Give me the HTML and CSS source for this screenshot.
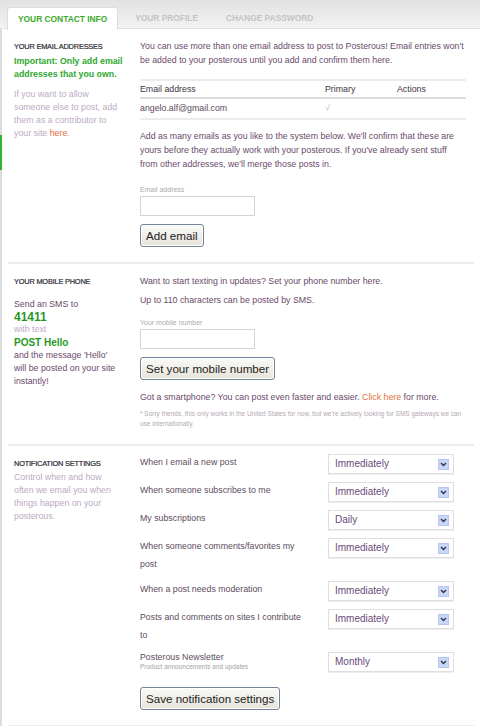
FILE: index.html
```html
<!DOCTYPE HTML>
<html lang="en">
<head>
  <title>Settings</title>
  <meta content="text/html;charset=utf-8" http-equiv="Content-type"/>
  <meta name="viewport" content="width=device-width, initial-scale=1">
  <link rel="stylesheet" href="styles.css">
</head>
<body>
<div id="tabs">
  <div class="tab active">YOUR CONTACT INFO</div>
  <div class="tab">YOUR PROFILE</div>
  <div class="tab">CHANGE PASSWORD</div>
</div>
<div id="page">
  <span class="focusbar"></span>

  <!-- email addresses -->
  <div class="section">
    <div class="side">
      <h3>YOUR EMAIL ADDRESSES</h3>
      <p class="important">Important: Only add email addresses that you own.</p>
      <p class="light narrow">If you want to allow someone else to post, add them as a contributor to your site <a href="#">here</a>.</p>
    </div>
    <div class="main">
      <p>You can use more than one email address to post to Posterous! Email entries won't be added to your posterous until you add and confirm them here.</p>
      <table class="emails">
        <thead>
        <tr><th>Email address</th><th class="primary">Primary</th><th class="actions">Actions</th></tr>
        </thead>
        <tbody>
        <tr><td>angelo.alf@gmail.com</td><td class="primary check">&radic;</td><td class="actions"></td></tr>
        </tbody>
      </table>
      <p>Add as many emails as you like to the system below. We'll confirm that these are yours before they actually work with your posterous. If you've already sent stuff from other addresses, we'll merge those posts in.</p>
      <label class="field">Email address</label>
      <input class="text" type="text"/>
      <button>Add email</button>
    </div>
  </div>

  <!-- mobile phone -->
  <div class="section">
    <div class="side sms">
      <h3>YOUR MOBILE PHONE</h3>
      <div>Send an SMS to</div>
      <div class="number">41411</div>
      <div class="light">with text</div>
      <div class="code">POST Hello</div>
      <div class="narrow">and the message 'Hello' will be posted on your site instantly!</div>
    </div>
    <div class="main">
      <p class="first">Want to start texting in updates? Set your phone number here.</p>
      <p>Up to 110 characters can be posted by SMS.</p>
      <label class="field near">Your mobile number</label>
      <input class="text" type="text"/>
      <button>Set your mobile number</button>
      <p class="smart">Got a smartphone? You can post even faster and easier. <a href="#">Click here</a> for more.</p>
      <p class="note">* Sorry friends, this only works in the United States for now, but we're actively looking for SMS gateways we can use internationally.</p>
    </div>
  </div>

  <!-- notifications -->
  <div class="section">
    <div class="side">
      <h3>NOTIFICATION SETTINGS</h3>
      <p class="light desc narrow">Control when and how often we email you when things happen on your posterous.</p>
    </div>
    <div class="main notify">
      <div class="row"><div class="label">When I email a new post</div><div class="select">Immediately<span class="arrow"><svg width="7" height="5" viewBox="0 0 7 5"><path d="M1 1l2.5 2.5L6 1" fill="none" stroke="#334" stroke-width="1.4"/></svg></span></div></div>
      <div class="row"><div class="label">When someone subscribes to me</div><div class="select">Immediately<span class="arrow"><svg width="7" height="5" viewBox="0 0 7 5"><path d="M1 1l2.5 2.5L6 1" fill="none" stroke="#334" stroke-width="1.4"/></svg></span></div></div>
      <div class="row"><div class="label">My subscriptions</div><div class="select">Daily<span class="arrow"><svg width="7" height="5" viewBox="0 0 7 5"><path d="M1 1l2.5 2.5L6 1" fill="none" stroke="#334" stroke-width="1.4"/></svg></span></div></div>
      <div class="row"><div class="label">When someone comments/favorites my post</div><div class="select">Immediately<span class="arrow"><svg width="7" height="5" viewBox="0 0 7 5"><path d="M1 1l2.5 2.5L6 1" fill="none" stroke="#334" stroke-width="1.4"/></svg></span></div></div>
      <div class="row"><div class="label">When a post needs moderation</div><div class="select">Immediately<span class="arrow"><svg width="7" height="5" viewBox="0 0 7 5"><path d="M1 1l2.5 2.5L6 1" fill="none" stroke="#334" stroke-width="1.4"/></svg></span></div></div>
      <div class="row"><div class="label">Posts and comments on sites I contribute to</div><div class="select">Immediately<span class="arrow"><svg width="7" height="5" viewBox="0 0 7 5"><path d="M1 1l2.5 2.5L6 1" fill="none" stroke="#334" stroke-width="1.4"/></svg></span></div></div>
      <div class="row news"><div class="label">Posterous Newsletter<small>Product announcements and updates</small></div><div class="select">Monthly<span class="arrow"><svg width="7" height="5" viewBox="0 0 7 5"><path d="M1 1l2.5 2.5L6 1" fill="none" stroke="#334" stroke-width="1.4"/></svg></span></div></div>
      <button class="save">Save notification settings</button>
    </div>
  </div>
</div>
</body>
</html>
```

FILE: styles.css
```css
body {
    font-family: 'Liberation Sans', Arial, Helvetica, sans-serif;
    font-size: 8.8px;
    background-color: #fff;
    color: #6a4a6a;
    margin: 0;
}

a {
    color: #e2703e;
    text-decoration: none;
}

p {
    margin: 0;
}

#tabs {
    height: 29px;
    box-sizing: border-box;
    padding: 7px 0 0 7px;
    display: flex;
    flex-direction: row;
    background: linear-gradient(#e2e2e2, #f2f2f2);
    border-bottom: 1px solid #e0e0e0;
}

.tab {
    height: 22px;
    line-height: 22px;
    padding: 0 11px;
    margin-right: 6px;
    font-size: 8.4px;
    font-weight: bold;
    color: #c4c4c4;
}

.tab.active {
    background: #fff;
    color: #3bab2c;
    border: 1px solid #ddd;
    border-bottom: none;
    border-radius: 3px 3px 0 0;
    height: 22px;
    padding: 0 10px;
}

#page {
    position: relative;
    border-left: 2px solid #dcdcdc;
    padding: 0 6px 4px 6px;
}

.focusbar {
    position: absolute;
    left: -2px;
    top: 106px;
    width: 2px;
    height: 35px;
    background: #33b233;
}

.section {
    display: flex;
    flex-direction: row;
    border-bottom: 2px solid #ececec;
    padding: 10px 0 15px 6px;
}

.side {
    width: 112px;
    flex: none;
    line-height: 13px;
}

.side .narrow {
    width: 104px;
}

.side h3 {
    margin: 1px 0 2px;
    font-size: 7.4px;
    line-height: 13px;
    font-weight: normal;
    color: #2b2b35;
    letter-spacing: -0.2px;
    -webkit-text-stroke: 0.2px #2b2b35;
    white-space: nowrap;
}

.important {
    color: #30a830;
    font-weight: bold;
    margin-bottom: 7px;
}

.light {
    color: #bcaac4;
}

.main {
    flex: auto;
    padding-left: 14px;
    padding-right: 8px;
    line-height: 14px;
}

table.emails {
    width: 100%;
    border-collapse: collapse;
    margin: 12px 0 9px;
    border-top: 2px solid #ececec;
    border-bottom: 2px solid #ececec;
}

table.emails th {
    font-weight: normal;
    text-align: left;
    color: #3e3444;
    padding: 1px 0;
    border-bottom: 2px solid #dcdcdc;
}

table.emails td {
    padding: 2px 0 3px;
    color: #5c4860;
}

table.emails .primary {
    width: 72px;
}

table.emails .actions {
    width: 69px;
}

table.emails .check {
    color: #bbb;
}

.field {
    display: block;
    font-size: 7px;
    color: #b0a8b0;
    margin-top: 13px;
    line-height: 12px;
}

.field.near {
    margin-top: 10px;
}

input.text {
    display: block;
    width: 115px;
    height: 20px;
    box-sizing: border-box;
    border: 1px solid #d4d4d4;
    margin: 0 0 8px;
    padding: 0;
}

button {
    display: block;
    font-family: 'Liberation Sans', Arial, sans-serif;
    font-size: 11.6px;
    color: #222;
    height: 23px;
    padding: 0 5px;
    border: 1px solid #70849a;
    border-radius: 3px;
    background: linear-gradient(#fafaf7, #e6e3da);
    box-shadow: inset 0 0 0 1px #fff;
}

.sms {
    color: #6a4a6a;
}

.sms h3 {
    margin-bottom: 10px;
}

.sms .number {
    color: #1f9a1f;
    font-weight: bold;
    font-size: 12px;
    line-height: 12px;
}

.sms .code {
    color: #1f9a1f;
    font-weight: bold;
    font-size: 10px;
}

.main .first {
    margin-bottom: 5px;
}

.smart {
    margin-top: 10px;
}

.note {
    margin-top: 5px;
    font-size: 6.5px;
    line-height: 10px;
    color: #b4a8b4;
}

.desc {
    margin-top: -1px;
}

.notify {
    margin-top: -2px;
}

.row {
    display: flex;
    flex-direction: row;
    align-items: flex-start;
    margin-bottom: 8px;
    padding-right: 12px;
}

.row .label {
    flex: none;
    width: 165px;
    line-height: 17.5px;
    color: #5c4c5c;
}

.row .label small {
    display: block;
    font-size: 6.5px;
    line-height: 8px;
    color: #a8a0a8;
}

.row.news {
    margin-bottom: 15px;
}

.row.news .label {
    line-height: 11px;
}

.select {
    flex: none;
    width: 126px;
    height: 20px;
    box-sizing: border-box;
    border: 1px solid #dedede;
    box-shadow: 0 1px 0 #eee;
    padding-left: 6px;
    display: flex;
    align-items: center;
    justify-content: space-between;
    font-size: 10px;
    color: #6a4a78;
    margin-left: auto;
}

.select .arrow {
    width: 11px;
    height: 11px;
    background: #c9d7f7;
    border: 1px solid #b6c6ee;
    box-sizing: border-box;
    margin-right: 4px;
    display: flex;
    align-items: center;
    justify-content: center;
}
```
